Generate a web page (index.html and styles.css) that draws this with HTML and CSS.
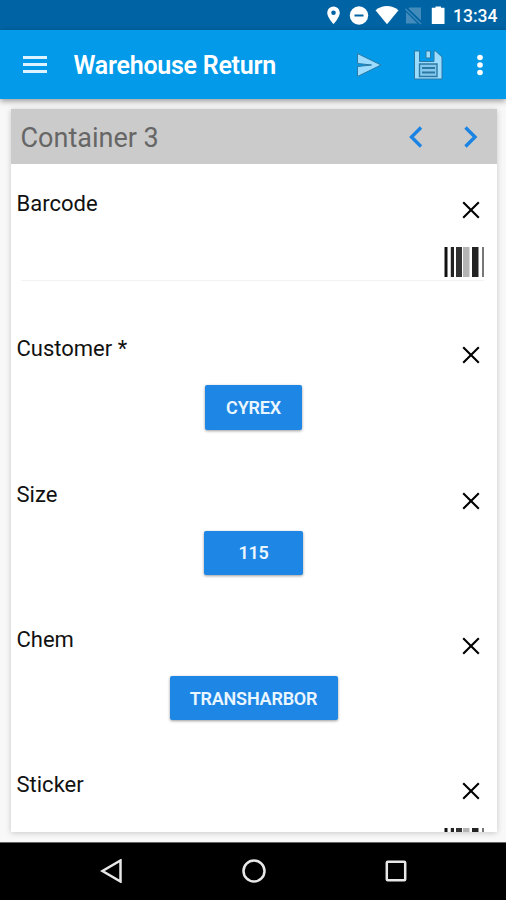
FILE: index.html
```html
<!DOCTYPE html>
<html lang="en">
<head>
<meta charset="utf-8">
<title>Warehouse Return</title>
<link rel="stylesheet" href="styles.css">
</head>
<body>
<svg class="defs" aria-hidden="true">
  <symbol id="close" viewBox="0 0 18 18"><path d="M1.200 1.200 16.800 16.800M16.800 1.200 1.200 16.800" stroke="#000" stroke-width="2.100"/></symbol>
  <symbol id="bars" viewBox="0 0 40 30">
    <path fill="#111" d="M.5 0h3v30h-3z"/><path fill="#222" d="M6.800 0H10v30H6.800z"/><path fill="#333" d="M12 0h6v30h-6z"/>
    <path fill="#b4b4b4" d="M19 0h6.500v30H19z"/><path fill="#222" d="M28 0h6.500v30H28z"/><path fill="#777" d="M38 0h2v30h-2z"/>
  </symbol>
</svg>
<div class="status">
  <svg class="status-icons" viewBox="0 0 120 20">
    <path fill="#fff" fill-rule="evenodd" d="M7.500 1.500A6.300 6.300 0 0 0 1.200 7.800C1.200 12.300 7.500 19.200 7.500 19.200S13.800 12.300 13.800 7.800A6.300 6.300 0 0 0 7.500 1.500ZM7.500 5.500a2.300 2.300 0 1 1 0 4.600 2.300 2.300 0 0 1 0-4.600Z"/>
    <circle cx="33" cy="10.500" r="9.200" fill="#fff"/><path d="M28.500 10.500h9" stroke="#0064a4" stroke-width="2"/>
    <path fill="#fff" d="M49.500 5.200Q61-3.200 72.500 5.200L61 19.200Z"/>
    <path fill="#428bba" d="M95 2.500v13L82.500 3.500 83.500 2.500ZM80 7 91.500 18.500H80Z"/><path d="M79.500 4 95 19" stroke="#428bba" stroke-width="1.300"/>
    <path fill="#fff" d="M109.500 1.500h5.500v1.200h3.500v16.300h-12.700V2.700h3.700Z"/>
  </svg>
  <span class="clock">13:34</span>
</div>
<header class="appbar">
  <svg class="menu" viewBox="0 0 24 18"><path d="M0 1.500h24M0 8.500h24M0 15.500h24" stroke="#ddf3ff" stroke-width="2.800"/></svg>
  <h1>Warehouse Return</h1>
  <svg class="send" viewBox="0 0 26 26"><path d="M1.500 1.500 25 13 1.500 24.500V14.500l14-1.500-14-1.500Z" fill="#9bdcff" stroke="#2c79a4" stroke-width="1"/></svg>
  <svg class="save" viewBox="0 0 30 30"><path d="M1.500 1h5v10.500h14.500V1h1.500L29 7v22H1.500Z" fill="#9bdcff" stroke="#2c79a4" stroke-width="1"/><path d="M13 1h4.500v7H13Z" fill="#9bdcff" stroke="#2c79a4"/><path d="M6.500 14h17.500v12.500H6.500Z" fill="#84c9ed" stroke="#2c79a4" stroke-width="1.400"/><path d="M9 18h13M9 22.500h13" stroke="#2c79a4" stroke-width="1.800"/></svg>
  <svg class="more" viewBox="0 0 6 22"><g fill="#fff"><circle cx="3" cy="3.500" r="2.800"/><circle cx="3" cy="11" r="2.800"/><circle cx="3" cy="18.500" r="2.800"/></g></svg>
</header>
<main>
  <div class="card">
    <div class="card-head">
      <h2>Container 3</h2>
      <svg class="chev" viewBox="0 0 14 22"><path d="M12 1.500 2.500 11 12 20.500"/></svg>
      <svg class="chev" viewBox="0 0 14 22"><path d="M1.500 1.500 11 11 1.500 20.500"/></svg>
    </div>
    <section class="field">
      <div class="row"><label>Barcode</label><svg class="close"><use href="#close"/></svg></div>
      <div class="scan"><svg class="bars"><use href="#bars"/></svg></div>
    </section>
    <section class="field">
      <div class="row"><label>Customer *</label><svg class="close"><use href="#close"/></svg></div>
      <button class="cyrex">CYREX</button>
    </section>
    <section class="field">
      <div class="row"><label>Size</label><svg class="close"><use href="#close"/></svg></div>
      <button class="size">115</button>
    </section>
    <section class="field">
      <div class="row"><label>Chem</label><svg class="close"><use href="#close"/></svg></div>
      <button class="chem">TRANSHARBOR</button>
    </section>
    <section class="field">
      <div class="row"><label>Sticker</label><svg class="close"><use href="#close"/></svg></div>
      <div class="scan"><svg class="bars"><use href="#bars"/></svg></div>
    </section>
  </div>
</main>
<nav>
  <svg viewBox="0 0 24 24"><path d="M20.500 1.500v21L2.500 12Z"/></svg>
  <svg viewBox="0 0 24 24"><circle cx="12" cy="12" r="10.500"/></svg>
  <svg viewBox="0 0 24 24"><rect x="2.800" y="2.800" width="18.400" height="18.400" rx="1"/></svg>
</nav>
</body>
</html>
```
FILE: styles.css
```css
* { box-sizing: border-box; }
body {
  margin: 0;
  height: 900px;
  overflow: hidden;
  display: flex;
  flex-direction: column;
  background: #f8f8f8;
  font-family: Roboto, "Liberation Sans", sans-serif;
}
svg { display: block; flex: none; fill: none; }
h1, h2 { margin: 0; }
.defs { position: absolute; width: 0; height: 0; }

.status {
  height: 30px;
  flex: none;
  display: flex;
  align-items: center;
  justify-content: flex-end;
  gap: 7px;
  padding-right: 9px;
  background: #0064a4;
}
.status-icons { width: 120px; height: 20px; }
.clock { width: 44px; color: #fff; font-size: 17.500px; font-weight: 500; line-height: 30px; padding-top: 2px; white-space: nowrap; }

.appbar {
  height: 69px;
  flex: none;
  display: flex;
  align-items: center;
  padding: 0 23px;
  background: #039be9;
  box-shadow: 0 2px 6px rgba(0, 0, 0, .4);
  z-index: 1;
}
.menu { width: 24px; height: 18px; }
.appbar h1 { flex: 1; margin-left: 26.500px; padding-top: 2px; color: #fff; font-size: 25px; font-weight: 600; letter-spacing: -.25px; line-height: 32px; white-space: nowrap; }
.send { width: 26px; height: 26px; margin-right: 31px; }
.save { width: 30px; height: 30px; margin-right: 34px; }
.more { width: 6px; height: 22px; }

main { height: 743px; flex: none; padding: 10px 9px 10px 10.500px; }
.card { height: 723px; overflow: hidden; background: #fff; box-shadow: 0 1px 6px rgba(0, 0, 0, .2); }
.card-head {
  height: 55px;
  display: flex;
  align-items: center;
  gap: 41px;
  padding: 0 19px 0 10px;
  background: #cbcbcb;
}
.card-head h2 { flex: 1; padding-top: 3px; color: #666; font-size: 27px; font-weight: 400; line-height: 32px; }
.chev { width: 14px; height: 22px; stroke: #1b84e3; stroke-width: 3.400; }

.field { height: 145.250px; padding: 25px 13px 0 6px; display: flex; flex-direction: column; }
.row { display: flex; justify-content: space-between; height: 58px; flex: none; padding-right: 4px; }
.row label { color: #111; font-size: 22px; line-height: 30px; }
.close { width: 18px; height: 18px; margin-top: 12px; }
.scan { height: 34px; margin-left: 4px; display: flex; justify-content: flex-end; border-bottom: 1px solid #f3f3f3; }
.bars { width: 40px; height: 30px; }
button {
  height: 44.500px;
  margin: -7px 0 0 6.500px;
  align-self: center;
  flex: none;
  padding: 1px 0 0;
  border: 0;
  border-radius: 2px;
  background: #1e87e5;
  color: #eaf6ff;
  font: 600 18px/42px Roboto, sans-serif;
  letter-spacing: -.2px;
  box-shadow: 0 1px 3px rgba(0, 0, 0, .4);
}
.cyrex { width: 97px; }
.size { width: 99px; }
.chem { width: 168px; }

nav {
  height: 58px;
  flex: none;
  display: flex;
  justify-content: space-between;
  align-items: center;
  padding: 0 98px 1px 100px;
  background: #000;
  border-top: 1px solid #666;
}
nav svg { width: 24px; height: 24px; stroke: #e8e8e8; stroke-width: 2.500; }
```
